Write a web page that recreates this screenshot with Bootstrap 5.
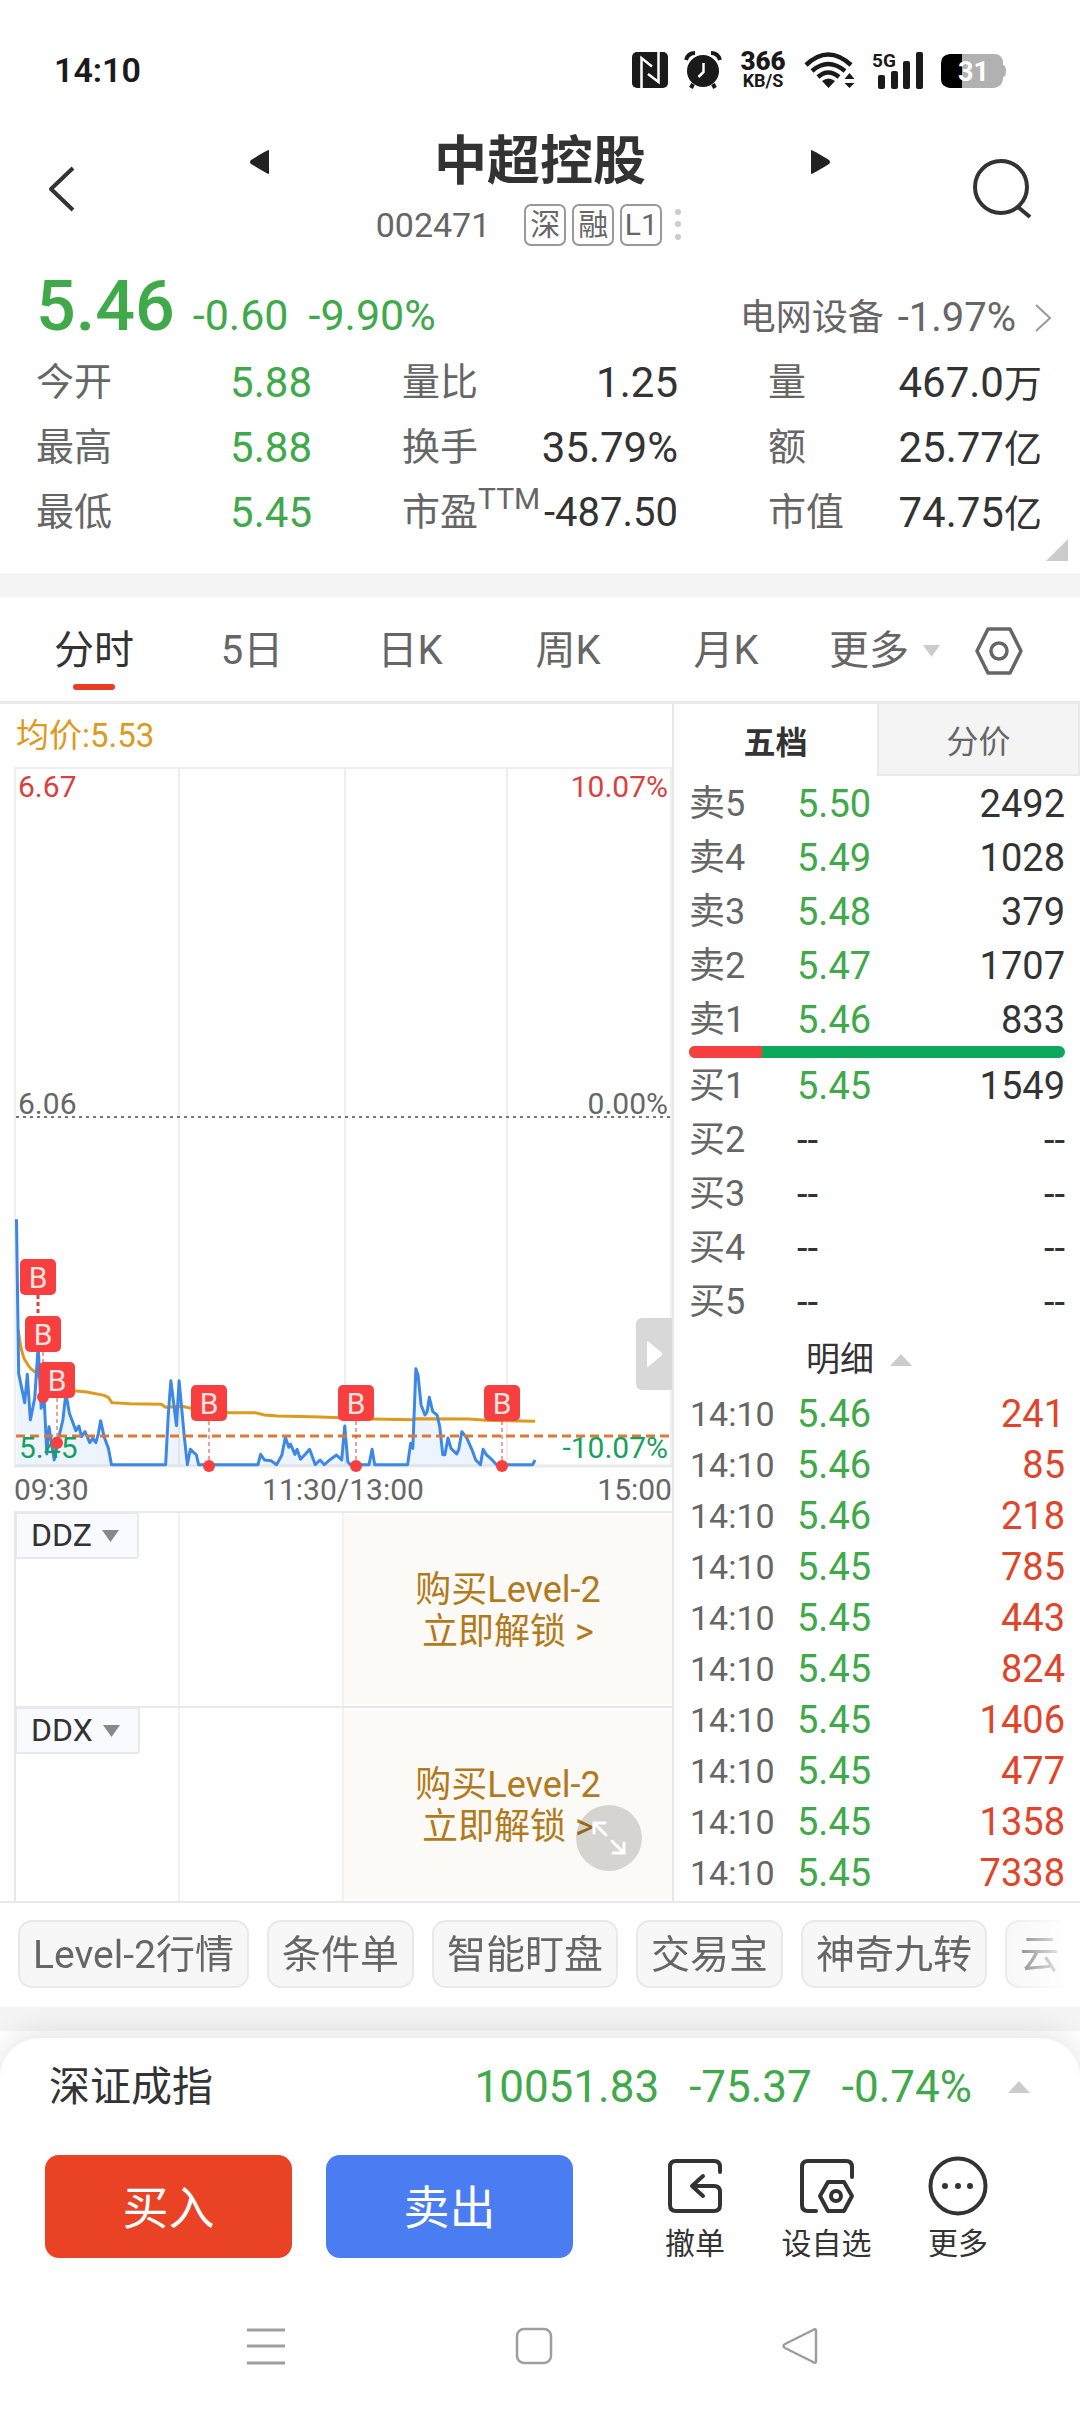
<!DOCTYPE html>
<html lang="zh-CN">
<head>
<meta charset="utf-8">
<meta name="viewport" content="width=device-width, initial-scale=1">
<title>中超控股 002471</title>
<link href="https://cdn.jsdelivr.net/npm/bootstrap@5.3.0/dist/css/bootstrap.min.css" rel="stylesheet">
<script src="https://cdn.jsdelivr.net/npm/bootstrap@5.3.0/dist/js/bootstrap.bundle.min.js"></script>
<style>
  :root { --up: #e0452a; --down: #40a94a; --ink: #333; --dim: #666; --rule: #e9e9e9; }
  body { font-family: Roboto, "Noto Sans CJK SC", sans-serif; color: var(--ink); background: #fff; overflow-x: hidden; }
  button { background: none; border: 0; padding: 0; color: inherit; }
  a { color: inherit; text-decoration: none; }
  svg { display: block; flex: none; overflow: visible; }
  .t-down { color: var(--down); }
  .t-up { color: var(--up); }
  .t-dim { color: var(--dim); }

  .status { height: 110px; padding: 32px 73px 0 54px; color: #1a1a1a; }
  .status .clock { font-size: 34px; font-weight: 600; line-height: 76px; }
  .status .icons { gap: 16px; line-height: 1; height: 76px; }
  .speed { width: 50px; font-weight: 700; text-align: center; }
  .speed b { font-size: 26px; line-height: 22px; display: block; }
  .speed i { font-size: 18px; line-height: 18px; display: block; font-style: normal; }

  .head { padding: 17px 48px 0; height: 150px; }
  .head .side-btn { width: 60px; height: 124px; }
  .head .mid { width: 582px; }
  .head h1 { font-size: 53px; line-height: 70px; font-weight: 700; margin: 0; }
  .code-line { font-size: 34px; line-height: 42px; margin-top: 7px; gap: 6px; padding-right: 16px; }
  .code-line .num { margin-right: 28px; }
  .tagbox { width: 42px; height: 42px; border: 2px solid #999; border-radius: 7px; font-size: 30px; line-height: 38px; text-align: center; }

  .quote { padding: 4px 28px 0 36px; height: 313px; position: relative; }
  .price-line { height: 86px; }
  .price-line .last { font-size: 70px; font-weight: 500; line-height: 84px; margin-right: 18px; }
  .price-line .chg { font-size: 43px; line-height: 50px; margin-right: 20px; }
  .price-line .ind { font-size: 36px; line-height: 50px; }
  .price-line .ind span { font-size: 40px; margin: 0 18px 0 14px; }
  .stats { display: grid; grid-template-columns: 276fr 90fr 276fr 90fr 274fr; grid-auto-rows: 65px; line-height: 65px; margin: 0 10px 0 0; }
  .stats > div { display: flex; justify-content: space-between; }
  .stats .s2 { grid-column: 3; }
  .stats .s3 { grid-column: 5; }
  .stats dt { font-size: 38px; font-weight: 400; color: var(--dim); white-space: nowrap; }
  .stats dt sup { font-size: 30px; top: -16px; line-height: 1; vertical-align: baseline; }
  .stats dd { font-size: 42px; margin: 0; white-space: nowrap; }
  .stats dd small { font-size: 38px; line-height: 1; }
  .stats dd.tight { font-size: 40px; }
  .corner { position: absolute; right: 12px; bottom: 12px; }

  .band { height: 24px; background: #f4f4f4; }

  .periods { height: 107px; border-bottom: 3px solid var(--rule); padding: 3px 57px 0 15px; font-size: 40px; color: var(--dim); }
  .periods .tab { flex: 0 0 158px; }
  .periods button { line-height: 102px; height: 102px; position: relative; }
  .periods .on { color: var(--ink); }
  .periods .on::after { content: ""; position: absolute; left: 58px; right: 58px; bottom: 12px; height: 6px; border-radius: 3px; background: #e93d24; }

  .board { display: grid; grid-template-columns: 674fr 406fr; border-bottom: 2px solid var(--rule); }
  .chart-side { border-right: 2px solid var(--rule); padding-left: 14px; position: relative; }
  .avg { font-size: 33px; line-height: 60px; height: 63px; color: #dd9a1c; padding: 2px 0 0 2px; }
  .chart-side > svg { width: 100%; height: auto; }
  .axis { font-size: 30px; line-height: 46px; height: 44px; color: var(--dim); }
  .sub { height: 195px; border-top: 2px solid var(--rule); border-left: 2px solid var(--rule); display: grid; grid-template-columns: 1fr 1fr 2fr; position: relative; }
  .sub .cell { border-right: 2px solid #f2f2f2; }
  .sub .pick { height: 47px; padding: 0 18px 0 14px; background: #f9faff; border: 2px solid var(--rule); border-radius: 3px; font-size: 32px; line-height: 43px; gap: 10px; white-space: nowrap; color: var(--ink); margin: -1px; }
  .sub .lock { background: #fbfaf6; color: #b27a1c; font-size: 36px; line-height: 42px; margin: 2px 0; text-align: center; padding-top: 3px; }
  .grip { position: absolute; right: 0; top: 614px; width: 36px; height: 72px; background: #d8d8d8; border-radius: 6px 0 0 6px; }
  .full { position: absolute; right: 30px; bottom: 30px; width: 66px; height: 66px; border-radius: 50%; background: rgba(0, 0, 0, .15); }

  .booktabs { display: grid; grid-template-columns: 1fr 1fr; height: 72px; font-size: 32px; }
  .booktabs button { color: var(--dim); background: #f4f4f4; border: 2px solid var(--rule); border-top: 0; padding-top: 5px; }
  .booktabs .on { background: #fff; color: var(--ink); font-weight: 700; border: 0; }
  .book { padding: 0 15px; }
  .book table { width: 100%; table-layout: fixed; }
  .book td, .book th { padding: 0; font-weight: 400; white-space: nowrap; }
  .book th { width: 108px; color: var(--dim); font-size: 36px; }
  .book td { font-size: 38px; color: var(--ink); }
  .book td:last-child { text-align: right; }
  .book td.t-down { color: var(--down); }
  .book td.t-up { color: var(--up); }
  .level { position: relative; }
  .level td, .level th { height: 54px; line-height: 52px; padding-top: 2px; }
  .ticks td, .ticks th { height: 51px; line-height: 49px; padding-top: 2px; }
  .ticks th { font-size: 34px; padding-left: 1px; }
  .ratio { height: 12px; border-radius: 6px; background: #0ca85c; }
  .ratio div { background: #f73f3f; }
  .more { height: 60px; font-size: 34px; gap: 16px; width: 100%; padding: 3px 36px 0 0; }

  .tools { margin: 0 18px; padding: 17px 0 19px; gap: 18px; overflow: hidden; -webkit-mask-image: linear-gradient(90deg, #000 94%, transparent 101%); mask-image: linear-gradient(90deg, #000 94%, transparent 101%); }
  .tools button { flex: none; height: 68px; padding: 2px 13px 0; border: 2px solid var(--rule); border-radius: 14px; background: #f7f7f7; font-size: 39px; line-height: 62px; color: var(--dim); white-space: nowrap; }

  .dock { background: #fff; position: relative; margin-top: 7px; border-radius: 40px 40px 0 0; box-shadow: 0 -6px 28px rgba(0, 0, 0, .1); }
  .index { height: 98px; padding: 0 50px 0 49px; font-size: 44px; }
  .index .nm { font-size: 41px; }
  .index .vals { gap: 30px; margin-right: 36px; }
  .index > * { line-height: 98px; }
  .acts { padding: 19px 92px 0 45px; }
  .acts .trade { width: 247px; height: 103px; border-radius: 14px; font-size: 46px; color: #fff; margin-right: 34px; padding-top: 3px; }
  .acts .buy { background: #e94225; }
  .acts .sell { background: #4a7df2; }
  .acts .side { flex: 1; margin-left: 58px; }
  .acts .side button { font-size: 30px; line-height: 32px; display: flex; flex-direction: column; align-items: center; gap: 12px; padding-top: 1px; white-space: nowrap; }
  .sysnav { padding: 67px 262px 48px 247px; }
</style>
</head>
<body>

<div class="status d-flex justify-content-between align-items-start">
  <div class="clock">14:10</div>
  <div class="icons d-flex align-items-center">
    <svg width="36" height="38" viewBox="0 0 36 38"><rect y="1" width="36" height="36" rx="5" fill="#1a1a1a"/><path d="M9.500 37V7L20 15.500M26.500 1v30L16 23" fill="none" stroke="#fff" stroke-width="2.500"/></svg>
    <svg width="38" height="38" viewBox="0 0 38 38"><circle cx="19" cy="20" r="16" fill="#1a1a1a"/><path d="M2 9Q4 2 11 2M27 2q7 0 9 7M9 33l-2 4M29 33l2 4" fill="none" stroke="#1a1a1a" stroke-width="4"/><path d="M19.500 12v9l-5 5" fill="none" stroke="#fff" stroke-width="2.500"/></svg>
    <div class="speed"><b>366</b><i>KB/S</i></div>
    <svg width="52" height="38" viewBox="0 0 52 38"><g fill="none" stroke="#1a1a1a" stroke-width="4.500"><path d="M2 14Q24-7 47 14M8 20q16-14 33 0M14 26q10-9 21 0"/></g><path d="M18 30q6.500-5 13 0l-6.500 7z" fill="#1a1a1a"/><path d="M45.500 22l5 6h-10zM45.500 37l5-5h-10z" fill="#1a1a1a"/></svg>
    <svg width="53" height="38" viewBox="0 0 53 38" fill="#1a1a1a"><text x="0" y="16" font-size="19" font-weight="700">5G</text><rect x="6" y="24" width="7" height="14" rx="2"/><rect x="19" y="20" width="7" height="18" rx="2"/><rect x="31" y="10" width="7" height="28" rx="2"/><rect x="44" y="1" width="7" height="37" rx="2"/></svg>
    <svg width="66" height="38" viewBox="0 0 66 38"><path d="M9 3h44q8 0 9 8v3l2 1q2 5 0 10l-2 1v2q-1 8-9 9H9q-8-1-9-9V12q1-8 9-9z" fill="#b1b1b1"/><path d="M9 3h12v34H9q-9-1-9-9V12q0-8 9-9z" fill="#000"/><text x="17" y="30" font-size="27" font-weight="700" fill="#fff">31</text></svg>
  </div>
</div>

<header class="head d-flex justify-content-between">
  <button class="side-btn d-flex align-items-center" aria-label="返回"><svg width="28" height="46" viewBox="0 0 28 46"><path d="M25 2L3 23l22 21" fill="none" stroke="#333" stroke-width="4" stroke-linejoin="round"/></svg></button>
  <div class="mid">
    <div class="d-flex justify-content-between align-items-center">
      <button aria-label="上一只"><svg width="22" height="26" viewBox="0 0 22 26"><path d="M20 1v24Q18 25 2 15q-2-2 0-4Q18 1 20 1z" fill="#222"/></svg></button>
      <h1>中超控股</h1>
      <button aria-label="下一只"><svg width="22" height="26" viewBox="0 0 22 26"><path d="M2 1v24q2 0 18-10 2-2 0-4Q4 1 2 1z" fill="#222"/></svg></button>
    </div>
    <div class="code-line d-flex justify-content-center align-items-center t-dim">
      <span class="num">002471</span><span class="tagbox">深</span><span class="tagbox">融</span><span class="tagbox">L1</span>
      <svg width="20" height="32" viewBox="0 0 20 32" fill="#ccc"><circle cx="10" cy="3" r="3"/><circle cx="10" cy="15" r="3"/><circle cx="10" cy="28" r="3"/></svg>
    </div>
  </div>
  <button class="side-btn d-flex align-items-center" aria-label="搜索"><svg width="60" height="60" viewBox="0 0 60 60" fill="none" stroke="#333" stroke-width="4"><circle cx="29" cy="28" r="26"/><path d="M46 48l12 10"/></svg></button>
</header>

<section class="quote">
  <div class="price-line d-flex align-items-baseline">
    <span class="last t-down">5.46</span><span class="chg t-down">-0.60</span><span class="chg t-down">-9.90%</span>
    <a href="#" class="ind ms-auto t-dim d-flex align-items-center">电网设备<span>-1.97%</span><svg width="18" height="28" viewBox="0 0 18 28"><path d="M2 1l14 13L2 27" fill="none" stroke="#999" stroke-width="2"/></svg></a>
  </div>
  <dl class="stats">
    <div><dt>今开</dt><dd class="t-down">5.88</dd></div>
    <div class="s2"><dt>量比</dt><dd>1.25</dd></div>
    <div class="s3"><dt>量</dt><dd>467.0<small>万</small></dd></div>
    <div><dt>最高</dt><dd class="t-down">5.88</dd></div>
    <div class="s2"><dt>换手</dt><dd>35.79%</dd></div>
    <div class="s3"><dt>额</dt><dd>25.77<small>亿</small></dd></div>
    <div><dt>最低</dt><dd class="t-down">5.45</dd></div>
    <div class="s2"><dt>市盈<sup>TTM</sup></dt><dd class="tight">-487.50</dd></div>
    <div class="s3"><dt>市值</dt><dd>74.75<small>亿</small></dd></div>
  </dl>
  <svg class="corner" width="22" height="22" viewBox="0 0 22 22"><path d="M22 0v22H0z" fill="#ccc"/></svg>
</section>

<div class="band"></div>

<nav class="periods d-flex align-items-center">
  <button class="tab on">分时</button><button class="tab">5日</button><button class="tab">日K</button><button class="tab">周K</button><button class="tab">月K</button>
  <button class="d-flex align-items-center ms-4">更多<svg class="ms-2 ps-1" width="24" height="12" viewBox="0 0 20 12"><path d="M2 0h17l-8.500 12z" fill="#ccc"/></svg></button>
  <button aria-label="设置" class="d-flex align-items-center ms-auto"><svg width="48" height="48" viewBox="0 0 48 48" fill="none" stroke="#666" stroke-width="3.500" stroke-linejoin="round"><path d="M13 2h22l11 22-11 22H13L2 24z"/><circle cx="24" cy="24" r="8"/></svg></button>
</nav>

<main class="board">
  <section class="chart-side">
    <div class="avg">均价:5.53</div>
    <svg viewBox="0 0 658 700" font-size="30">
      <path d="M1 0v700M657 0v700M0 1h658M165 0v700M331 0v700M493 0v700" stroke="#efefef" stroke-width="2" fill="none"/>
      <path d="M0 699h658" stroke="#e9e9e9" stroke-width="3"/>
      <path d="M2 350h656" stroke="#777" stroke-width="2" stroke-dasharray="3 4"/>
      <!-- price and average curves -->
      <g transform="translate(-14 393) scale(.43365 .33333)" fill="none">
        <path d="M38 180L43 640 57 728 63 643 70 780 80 715 88 560 95 745 102 720 108 882 113 800 125 900 135 835 145 780 152 700 160 760 175 812 182 798 188 830 196 815 207 848 214 835 221 848 227 820 232 782 240 830 250 865 257 914H382L388 765 394 662 407 797 413 662 425 830 432 914 439 868 453 885 458 914H595L601 883 610 900 625 902 638 914 650 885 658 832 666 862 670 852 680 883 685 868 693 898 704 883 714 868 727 914 738 900 748 914 760 900 776 885 788 900 795 798 802 905 808 914H851L858 868 864 914H940L947 850 952 865 959 626 964 645 971 735 980 765 985 755 990 712 998 755 1008 765 1014 800 1021 884 1026 884 1033 834 1040 865 1053 882 1058 868 1065 815 1076 833 1088 868 1097 900 1108 914 1114 868 1122 885 1135 900 1145 914H1228L1234 900 1234 917H38z" fill="#3d88e6" fill-opacity=".09"/>
        <path d="M42 510Q50 590 60 605 70 630 82 636L100 670 170 692 200 696 240 706 250 712 258 728 300 731 372 733 382 742 420 739 440 745 530 758 588 758 610 765 640 768 740 771 800 774 860 777 950 779 960 776 1080 777 1120 781 1234 784" stroke="#dd9a1c" stroke-width="3" vector-effect="non-scaling-stroke"/>
        <path d="M38 178L43 640 57 728 63 643 70 780 80 715 88 560 95 745 102 720 108 882 113 800 125 900 135 835 145 780 152 700 160 760 175 812 182 798 188 830 196 815 207 848 214 835 221 848 227 820 232 782 240 830 250 865 257 914H382L388 765 394 662 407 797 413 662 425 830 432 914 439 868 453 885 458 914H595L601 883 610 900 625 902 638 914 650 885 658 832 666 862 670 852 680 883 685 868 693 898 704 883 714 868 727 914 738 900 748 914 760 900 776 885 788 900 795 798 802 905 808 914H851L858 868 864 914H940L947 850 952 865 959 626 964 645 971 735 980 765 985 755 990 712 998 755 1008 765 1014 800 1021 884 1026 884 1033 834 1040 865 1053 882 1058 868 1065 815 1076 833 1088 868 1097 900 1108 914 1114 868 1122 885 1135 900 1145 914H1228L1234 900" stroke="#3d88e6" stroke-width="3" stroke-linejoin="round" vector-effect="non-scaling-stroke"/>
      </g>
      <path d="M2 669h656" stroke="#dc7a35" stroke-width="3" stroke-dasharray="9 5"/>
      <g fill="#18a060"><text x="5" y="691">5.45</text><text x="654" y="691" text-anchor="end">-10.07%</text></g>
      <g fill="#d9413f"><text x="4" y="30">6.67</text><text x="654" y="30" text-anchor="end">10.07%</text></g>
      <g fill="#666"><text x="4" y="347">6.06</text><text x="654" y="347" text-anchor="end">0.00%</text></g>
      <g stroke="#d9413f" stroke-dasharray="4 3"><path d="M24 528v22" stroke-width="3"/><path d="M29 585v45M43 631v45M195 654v45M342 654v45M488 654v45"/></g>
      <g fill="#f73f3f"><circle cx="29" cy="630" r="6"/><circle cx="43" cy="676" r="6"/><circle cx="195" cy="699" r="6"/><circle cx="342" cy="699" r="6"/><circle cx="488" cy="699" r="6"/>
        <rect x="6" y="492" width="36" height="36" rx="5"/><rect x="11" y="549" width="36" height="36" rx="5"/><rect x="25" y="595" width="36" height="36" rx="5"/><rect x="177" y="618" width="36" height="36" rx="5"/><rect x="324" y="618" width="36" height="36" rx="5"/><rect x="470" y="618" width="36" height="36" rx="5"/></g>
      <g fill="#ffe3e0" text-anchor="middle"><text x="24" y="521">B</text><text x="29" y="578">B</text><text x="43" y="624">B</text><text x="195" y="647">B</text><text x="342" y="647">B</text><text x="488" y="647">B</text></g>
    </svg>
    <div class="axis d-flex justify-content-between"><span>09:30</span><span>11:30/13:00</span><span>15:00</span></div>
    <div class="sub">
      <div class="cell"><button class="pick d-flex align-items-center">DDZ<svg width="17" height="12" viewBox="0 0 17 12"><path d="M0 0h17L8.500 12z" fill="#888"/></svg></button></div>
      <div class="cell"></div>
      <a href="#" class="lock d-flex flex-column justify-content-center">购买Level-2<br>立即解锁 &gt;</a>
    </div>
    <div class="sub">
      <div class="cell"><button class="pick d-flex align-items-center">DDX<svg width="17" height="12" viewBox="0 0 17 12"><path d="M0 0h17L8.500 12z" fill="#888"/></svg></button></div>
      <div class="cell"></div>
      <a href="#" class="lock d-flex flex-column justify-content-center">购买Level-2<br>立即解锁 &gt;</a>
    </div>
    <button class="grip d-flex align-items-center justify-content-center" aria-label="展开"><svg width="18" height="28" viewBox="0 0 18 28"><path d="M2 2v24q0 2 2 0l13-11v-2L4 2Q2 0 2 2z" fill="#fff"/></svg></button>
    <button class="full d-flex align-items-center justify-content-center" aria-label="全屏"><svg width="34" height="34" viewBox="0 0 34 34" fill="none" stroke="#fff" stroke-width="3" stroke-linecap="round"><path d="M2 12V2h11M2 2l12 12M32 22v10H21M32 32L20 20"/></svg></button>
  </section>

  <aside>
    <div class="booktabs"><button class="on">五档</button><button>分价</button></div>
    <div class="book">
      <table class="level"><tbody>
        <tr><th scope="row">卖5</th><td class="t-down">5.50</td><td>2492</td></tr>
        <tr><th scope="row">卖4</th><td class="t-down">5.49</td><td>1028</td></tr>
        <tr><th scope="row">卖3</th><td class="t-down">5.48</td><td>379</td></tr>
        <tr><th scope="row">卖2</th><td class="t-down">5.47</td><td>1707</td></tr>
        <tr><th scope="row">卖1</th><td class="t-down">5.46</td><td>833</td></tr>
      </tbody></table>
      <div class="ratio d-flex overflow-hidden"><div style="width:19.500%"></div></div>
      <table class="level"><tbody>
        <tr><th scope="row">买1</th><td class="t-down">5.45</td><td>1549</td></tr>
        <tr><th scope="row">买2</th><td>--</td><td>--</td></tr>
        <tr><th scope="row">买3</th><td>--</td><td>--</td></tr>
        <tr><th scope="row">买4</th><td>--</td><td>--</td></tr>
        <tr><th scope="row">买5</th><td>--</td><td>--</td></tr>
      </tbody></table>
      <button class="more d-flex align-items-center justify-content-center">明细<svg width="22" height="12" viewBox="0 0 22 12"><path d="M0 12h22L11 0z" fill="#ccc"/></svg></button>
      <table class="ticks"><tbody>
        <tr><th scope="row">14:10</th><td class="t-down">5.46</td><td class="t-up">241</td></tr>
        <tr><th scope="row">14:10</th><td class="t-down">5.46</td><td class="t-up">85</td></tr>
        <tr><th scope="row">14:10</th><td class="t-down">5.46</td><td class="t-up">218</td></tr>
        <tr><th scope="row">14:10</th><td class="t-down">5.45</td><td class="t-up">785</td></tr>
        <tr><th scope="row">14:10</th><td class="t-down">5.45</td><td class="t-up">443</td></tr>
        <tr><th scope="row">14:10</th><td class="t-down">5.45</td><td class="t-up">824</td></tr>
        <tr><th scope="row">14:10</th><td class="t-down">5.45</td><td class="t-up">1406</td></tr>
        <tr><th scope="row">14:10</th><td class="t-down">5.45</td><td class="t-up">477</td></tr>
        <tr><th scope="row">14:10</th><td class="t-down">5.45</td><td class="t-up">1358</td></tr>
        <tr><th scope="row">14:10</th><td class="t-down">5.45</td><td class="t-up">7338</td></tr>
      </tbody></table>
    </div>
  </aside>
</main>

<div class="tools d-flex">
  <button>Level-2行情</button><button>条件单</button><button>智能盯盘</button><button>交易宝</button><button>神奇九转</button><button>云</button>
</div>
<div class="band"></div>

<footer class="dock">
  <div class="index d-flex align-items-center">
    <span class="nm">深证成指</span>
    <div class="vals d-flex ms-auto t-down"><span>10051.83</span><span>-75.37</span><span>-0.74%</span></div>
    <svg width="22" height="12" viewBox="0 0 22 12"><path d="M0 12h22L11 0z" fill="#ccc"/></svg>
  </div>
  <div class="acts d-flex">
    <button class="trade buy">买入</button><button class="trade sell">卖出</button>
    <div class="side d-flex justify-content-between">
      <button><svg width="60" height="60" viewBox="0 0 60 60" fill="none" stroke="#333" stroke-width="4" stroke-linecap="round" stroke-linejoin="round"><path d="M55 16v-5q0-6-6-6H11q-6 0-6 6v38q0 6 6 6h38q6 0 6-6V36q0-6-6-6H28M38 20L27 30l11 10"/></svg>撤单</button>
      <button><svg width="60" height="60" viewBox="0 0 60 60" fill="none" stroke="#333" stroke-width="4" stroke-linecap="round" stroke-linejoin="round"><path d="M55 21V11q0-6-6-6H11q-6 0-6 6v38q0 6 6 6h8M31 26h16l8 14-8 15H31l-8-15z"/><circle cx="39" cy="40" r="5"/></svg>设自选</button>
      <button><svg width="60" height="60" viewBox="0 0 60 60"><circle cx="30" cy="30" r="27.500" fill="none" stroke="#333" stroke-width="4"/><g fill="#333"><circle cx="17" cy="30" r="3"/><circle cx="30" cy="30" r="3"/><circle cx="42" cy="30" r="3"/></g></svg>更多</button>
    </div>
  </div>
  <div class="sysnav d-flex justify-content-between">
    <button aria-label="最近任务"><svg width="38" height="38" viewBox="0 0 38 38"><path d="M0 3h38M0 19h38M0 36h38" stroke="#9e9e9e" stroke-width="3"/></svg></button>
    <button aria-label="主屏幕"><svg width="38" height="38" viewBox="0 0 38 38"><rect x="2" y="2" width="34" height="34" rx="7" fill="none" stroke="#9e9e9e" stroke-width="2.500"/></svg></button>
    <button aria-label="返回上级"><svg width="36" height="38" viewBox="0 0 36 38"><path d="M34 4v30q0 3-3 1L3 21q-3-2 0-4L31 3q3-2 3 1z" fill="none" stroke="#9e9e9e" stroke-width="2.500"/></svg></button>
  </div>
</footer>
</body>
</html>
